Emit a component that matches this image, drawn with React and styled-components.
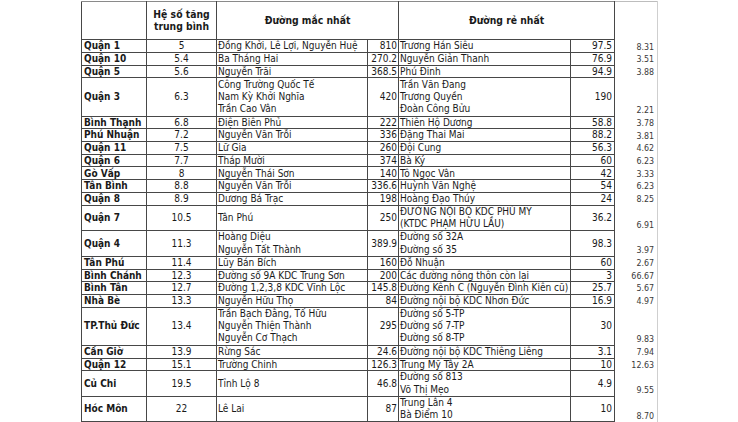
import React from 'react';
import styled, { createGlobalStyle } from 'styled-components';

const Global = createGlobalStyle`
  html, body { margin: 0; padding: 0; background: #ffffff; }
  body {
    font-family: "DejaVu Sans Condensed", "DejaVu Sans", "Liberation Sans", sans-serif;
    color: #1a1a1a;
  }
`;

const Page = styled.div`
  width: 738px;
  height: 422px;
  overflow: hidden;
  box-sizing: border-box;
  padding: 1px 0 0 81px;
  background: #ffffff;
`;

const Sheet = styled.table`
  border-collapse: collapse;
  table-layout: fixed;
  width: 576px;
  font-size: 10px;
`;

const Col = styled.col`
  width: ${(p) => p.$w}px;
`;

const HeadRow = styled.tr`
  height: 38.3px;
`;

const Row = styled.tr`
  height: ${(p) => p.$lines * 12.72}px;
`;

const Cell = styled.td`
  border: 1px solid #474747;
  padding: ${(p) => p.$pad || '0 1px'};
  line-height: 11.6px;
  vertical-align: middle;
  text-align: ${(p) => p.$align || 'left'};
  font-weight: 400;
  white-space: nowrap;
  overflow: hidden;
`;

const District = styled(Cell)`
  font-weight: 700;
  font-size: 10px;
  padding: 0 1px 0 2px;
`;

const HeadCell = styled.th`
  border: 1px solid #474747;
  border-top-color: #8a8a8a;
  padding: 0;
  font-weight: 700;
  font-size: 10.3px;
  line-height: 13px;
  text-align: center;
  vertical-align: middle;
`;

const BlankHead = styled.th`
  border-left: 1px solid #474747;
  border-top: 1px solid #bdbdbd;
  border-right: 1px solid #cfcfcf;
  border-bottom: none;
`;

const Ratio = styled.td`
  border-left: 1px solid #474747;
  border-right: 1px solid #cfcfcf;
  border-top: none;
  border-bottom: none;
  padding: 0 3px 0 0;
  vertical-align: bottom;
  text-align: right;
  font-size: 8.8px;
  line-height: 11px;
  color: #3a3a3a;
`;

const Line = styled.div`
  display: block;
  line-height: ${(p) => (p.$multi ? '12.3px' : '11.6px')};
`;

const rows = [
  { d: 'Quận 1', k: '5', exp: ['Đồng Khởi, Lê Lợi, Nguyễn Huệ'], ep: '810', chp: ['Trương Hán Siêu'], cp: '97.5', r: '8.31', n: 1 },
  { d: 'Quận 10', k: '5.4', exp: ['Ba Tháng Hai'], ep: '270.2', chp: ['Nguyễn Giản Thanh'], cp: '76.9', r: '3.51', n: 1 },
  { d: 'Quận 5', k: '5.6', exp: ['Nguyễn Trãi'], ep: '368.5', chp: ['Phú Đinh'], cp: '94.9', r: '3.88', n: 1 },
  { d: 'Quận 3', k: '6.3', exp: ['Công Trường Quốc Tế', 'Nam Kỳ Khởi Nghĩa', 'Trần Cao Vân'], ep: '420', chp: ['Trần Văn Đang', 'Trương Quyền', 'Đoàn Công Bửu'], cp: '190', r: '2.21', n: 3 },
  { d: 'Bình Thạnh', k: '6.8', exp: ['Điện Biên Phủ'], ep: '222', chp: ['Thiên Hộ Dương'], cp: '58.8', r: '3.78', n: 1 },
  { d: 'Phú Nhuận', k: '7.2', exp: ['Nguyễn Văn Trỗi'], ep: '336', chp: ['Đặng Thai Mai'], cp: '88.2', r: '3.81', n: 1 },
  { d: 'Quận 11', k: '7.5', exp: ['Lữ Gia'], ep: '260', chp: ['Đội Cung'], cp: '56.3', r: '4.62', n: 1 },
  { d: 'Quận 6', k: '7.7', exp: ['Tháp Mười'], ep: '374', chp: ['Bà Ký'], cp: '60', r: '6.23', n: 1 },
  { d: 'Gò Vấp', k: '8', exp: ['Nguyễn Thái Sơn'], ep: '140', chp: ['Tô Ngọc Vân'], cp: '42', r: '3.33', n: 1 },
  { d: 'Tân Bình', k: '8.8', exp: ['Nguyễn Văn Trỗi'], ep: '336.6', chp: ['Huỳnh Văn Nghệ'], cp: '54', r: '6.23', n: 1 },
  { d: 'Quận 8', k: '8.9', exp: ['Dương Bá Trạc'], ep: '198', chp: ['Hoàng Đạo Thúy'], cp: '24', r: '8.25', n: 1 },
  { d: 'Quận 7', k: '10.5', exp: ['Tân Phú'], ep: '250', chp: ['ĐƯỜNG NỘI BỘ KDC PHÚ MỸ', '(KTDC PHẠM HỮU LẦU)'], cp: '36.2', r: '6.91', n: 2 },
  { d: 'Quận 4', k: '11.3', exp: ['Hoàng Diệu', 'Nguyễn Tất Thành'], ep: '389.9', chp: ['Đường số 32A', 'Đường số 35'], cp: '98.3', r: '3.97', n: 2 },
  { d: 'Tân Phú', k: '11.4', exp: ['Lũy Bán Bích'], ep: '160', chp: ['Đỗ Nhuận'], cp: '60', r: '2.67', n: 1 },
  { d: 'Bình Chánh', k: '12.3', exp: ['Đường số 9A KDC Trung Sơn'], ep: '200', chp: ['Các đường nông thôn còn lại'], cp: '3', r: '66.67', n: 1 },
  { d: 'Bình Tân', k: '12.7', exp: ['Đường 1,2,3,8 KDC Vĩnh Lộc'], ep: '145.8', chp: ['Đường Kênh C (Nguyễn Đình Kiên cũ)'], cp: '25.7', r: '5.67', n: 1 },
  { d: 'Nhà Bè', k: '13.3', exp: ['Nguyễn Hữu Thọ'], ep: '84', chp: ['Đường nội bộ KDC Nhơn Đức'], cp: '16.9', r: '4.97', n: 1 },
  { d: 'TP.Thủ Đức', k: '13.4', exp: ['Trần Bạch Đằng, Tố Hữu', 'Nguyễn Thiện Thành', 'Nguyễn Cơ Thạch'], ep: '295', chp: ['Đường số 5-TP', 'Đường số 7-TP', 'Đường số 8-TP'], cp: '30', r: '9.83', n: 3 },
  { d: 'Cần Giờ', k: '13.9', exp: ['Rừng Sác'], ep: '24.6', chp: ['Đường nội bộ KDC Thiêng Liêng'], cp: '3.1', r: '7.94', n: 1 },
  { d: 'Quận 12', k: '15.1', exp: ['Trường Chinh'], ep: '126.3', chp: ['Trung Mỹ Tây 2A'], cp: '10', r: '12.63', n: 1 },
  { d: 'Củ Chi', k: '19.5', exp: ['Tỉnh Lộ 8'], ep: '46.8', chp: ['Đường số 813', 'Võ Thị Mẹo'], cp: '4.9', r: '9.55', n: 2 },
  { d: 'Hóc Môn', k: '22', exp: ['Lê Lai'], ep: '87', chp: ['Trung Lân 4', 'Bà Điểm 10'], cp: '10', r: '8.70', n: 2 },
];

const Lines = ({ items }) =>
  items.map((t, i) => (
    <Line key={i} $multi={items.length > 1}>
      {t}
    </Line>
  ));

export default function App() {
  return (
    <>
      <Global />
      <Page>
        <Sheet>
          <colgroup>
            <Col $w={65} />
            <Col $w={70} />
            <Col $w={151} />
            <Col $w={31} />
            <Col $w={172} />
            <Col $w={44} />
            <Col $w={43} />
          </colgroup>
          <thead>
            <HeadRow>
              <HeadCell />
              <HeadCell>
                <Line>Hệ số tăng</Line>
                <Line>trung bình</Line>
              </HeadCell>
              <HeadCell colSpan={2}>Đường mắc nhất</HeadCell>
              <HeadCell colSpan={2}>Đường rẻ nhất</HeadCell>
              <BlankHead />
            </HeadRow>
          </thead>
          <tbody>
            {rows.map((r) => (
              <Row key={r.d} $lines={r.n}>
                <District>{r.d}</District>
                <Cell $align="center">{r.k}</Cell>
                <Cell><Lines items={r.exp} /></Cell>
                <Cell $align="right" $pad="0 1px 0 0">{r.ep}</Cell>
                <Cell $pad="0 1px 0 1px"><Lines items={r.chp} /></Cell>
                <Cell $align="right" $pad="0 2px 0 0">{r.cp}</Cell>
                <Ratio>{r.r}</Ratio>
              </Row>
            ))}
          </tbody>
        </Sheet>
      </Page>
    </>
  );
}
